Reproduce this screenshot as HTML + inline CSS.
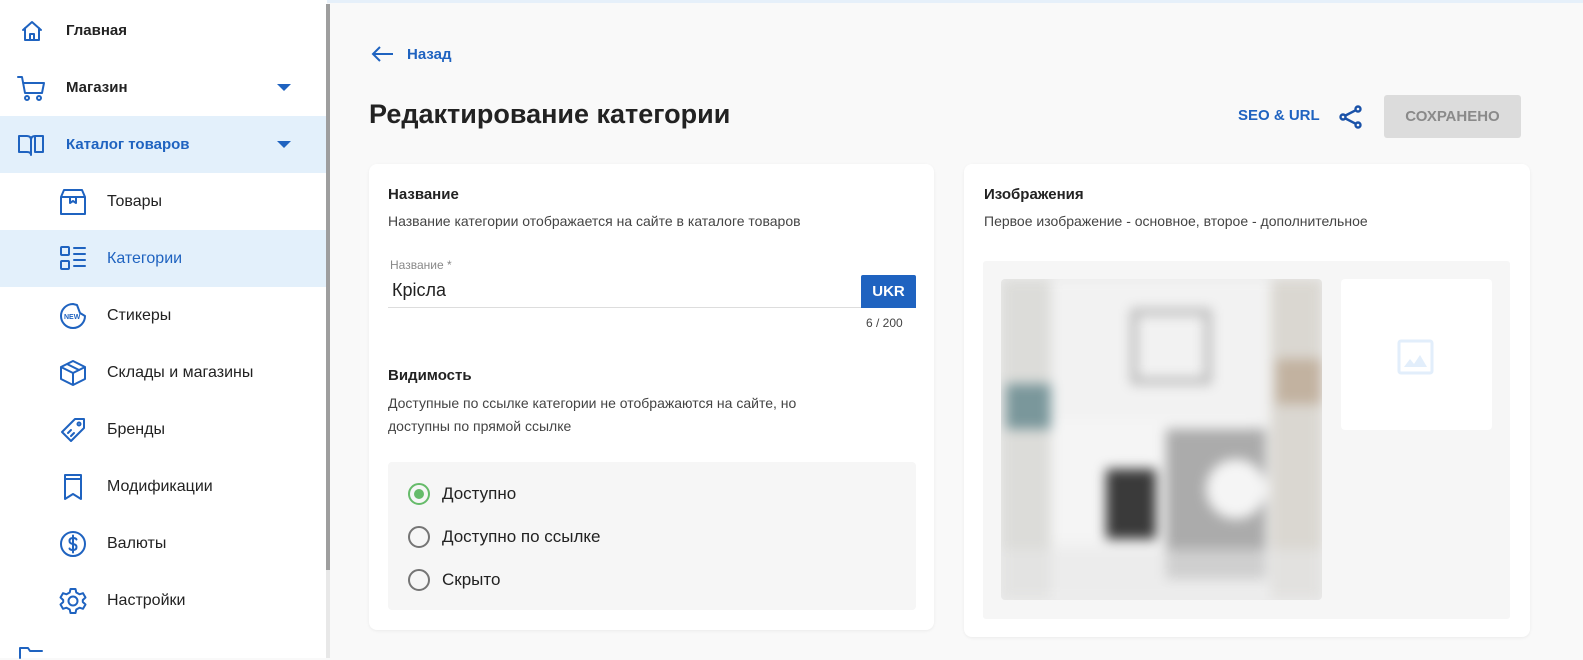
<!DOCTYPE html>
<html><head><meta charset="utf-8"><style>
*{margin:0;padding:0;box-sizing:border-box}
body{width:1583px;height:658px;overflow:hidden;background:#f9f9f9;font-family:"Liberation Sans",Arial,sans-serif;position:relative;color:#222}
.a{position:absolute}
.side{left:0;top:0;width:327px;height:658px;background:#fff}
.sb{left:326px;top:4px;width:4px;height:566px;background:#9e9e9e}
.sbt{left:326px;top:570px;width:4px;height:88px;background:#e8e8e8}
.topl{left:0;top:0;width:1583px;height:3px;background:#e6f0fa}
.it{position:absolute;left:0;width:326px;height:57px;display:flex;align-items:center;font-size:16px;color:#222}
.it.sel{background:#e3f0fb;color:#1f63c0}
.it svg{position:absolute}
.it span{position:absolute}
.ico{fill:none;stroke:#1f63c0;stroke-width:2;stroke-linecap:round;stroke-linejoin:round}
.tri{position:absolute;left:277px;width:0;height:0;border-left:7px solid transparent;border-right:7px solid transparent;border-top:7px solid #1f63c0}
.card{background:#fff;border-radius:8px;box-shadow:0 1px 3px rgba(0,0,0,.06)}
.h{font-weight:bold;font-size:15px;color:#222}
.sub{font-size:14px;color:#444}
.rad{position:absolute;left:408px;width:22px;height:22px;border:2px solid #757575;border-radius:50%}
.rl{position:absolute;left:442px;font-size:17px;color:#222}
</style></head><body>
<div class="a topl"></div>
<div class="a side"></div>
<div class="a sb"></div><div class="a sbt"></div>

<div class="it" style="top:2px"><svg style="left:20px" width="24" height="24" viewBox="0 0 24 24" class="ico"><path d="M3 11 L12 3 L21 11 M5 9 V21 H19 V9 M10 21 V15 H14 V21"/></svg><span style="left:66px;font-weight:bold;font-size:15px">Главная</span></div>
<div class="it" style="top:59px"><svg style="left:16px" width="30" height="30" viewBox="0 0 30 30" class="ico"><path d="M2 4 H6 L9 20 H26 L28 10 H7"/><circle cx="11" cy="25" r="2"/><circle cx="23" cy="25" r="2"/></svg><span style="left:66px;font-weight:bold;font-size:15px">Магазин</span><div class="tri" style="top:25px"></div></div>
<div class="it sel" style="top:116px"><svg style="left:16px" width="30" height="28" viewBox="0 0 30 28" class="ico"><path d="M3 5 H11 Q15 5 15 9 V24 Q15 21 11 21 H3 Z M27 5 H19 Q15 5 15 9 M19 5 V21 H27 V5"/></svg><span style="left:66px;font-weight:bold;font-size:15px">Каталог товаров</span><div class="tri" style="top:25px"></div></div>
<div class="it" style="top:173px"><svg style="left:58px" width="30" height="30" viewBox="0 0 30 30" class="ico"><path d="M3 10 L6 3 H24 L27 10 V27 H3 Z M3 10 H27 M12 10 V16 L15 14 L18 16 V10"/></svg><span style="left:107px">Товары</span></div>
<div class="it sel" style="top:230px"><svg style="left:58px" width="30" height="30" viewBox="0 0 30 30" class="ico"><rect x="3" y="3" width="8" height="8" rx="1"/><rect x="3" y="17" width="8" height="8" rx="1"/><path d="M16 4 H27 M16 10 H27 M16 16 H27 M16 22 H27"/></svg><span style="left:107px">Категории</span></div>
<div class="it" style="top:287px"><svg style="left:58px" width="30" height="30" viewBox="0 0 30 30" class="ico"><path d="M15 3 A12 12 0 1 0 27 15 L22 12 L19 4 Z"/><text x="6" y="18" font-size="7" fill="#1f63c0" stroke="none" font-weight="bold" font-family="Liberation Sans">NEW</text></svg><span style="left:107px">Стикеры</span></div>
<div class="it" style="top:344px"><svg style="left:58px" width="30" height="30" viewBox="0 0 30 30" class="ico"><path d="M15 3 L27 9 V21 L15 27 L3 21 V9 Z M3 9 L15 15 L27 9 M15 15 V27 M9 6 L21 12"/></svg><span style="left:107px">Склады и магазины</span></div>
<div class="it" style="top:401px"><svg style="left:58px" width="30" height="30" viewBox="0 0 30 30" class="ico"><path d="M4 17 L17 4 H26 V13 L13 26 Z M10 18 L13 15 M13 21 L16 18"/><circle cx="21" cy="9" r="1.5"/></svg><span style="left:107px">Бренды</span></div>
<div class="it" style="top:458px"><svg style="left:58px" width="30" height="30" viewBox="0 0 30 30" class="ico"><path d="M7 3 H23 V27 L15 22 L7 27 Z M7 7 H23"/></svg><span style="left:107px">Модификации</span></div>
<div class="it" style="top:515px"><svg style="left:58px" width="30" height="30" viewBox="0 0 30 30" class="ico"><circle cx="15" cy="15" r="12"/><path d="M18.5 10.5 Q18 9 15 9 Q11.5 9 11.5 12 Q11.5 14.5 15 15 Q18.5 15.5 18.5 18 Q18.5 21 15 21 Q12 21 11.5 19.5 M15 6.5 V23.5"/></svg><span style="left:107px">Валюты</span></div>
<div class="it" style="top:572px"><svg style="left:58px" width="30" height="30" viewBox="0 0 30 30" class="ico"><path d="M12.5 3 H17.5 L18.3 6.5 L21.5 8.3 L25 7.2 L27.5 11.5 L24.8 14 V16 L27.5 18.5 L25 22.8 L21.5 21.7 L18.3 23.5 L17.5 27 H12.5 L11.7 23.5 L8.5 21.7 L5 22.8 L2.5 18.5 L5.2 16 V14 L2.5 11.5 L5 7.2 L8.5 8.3 L11.7 6.5 Z"/><circle cx="15" cy="15" r="4.5"/></svg><span style="left:107px">Настройки</span></div>
<svg class="a ico" style="left:18px;top:646px" width="26" height="14" viewBox="0 0 26 14"><path d="M2 12 V2 H10 L12 5 H24"/></svg>

<!-- main -->
<svg class="a" style="left:371px;top:45px" width="24" height="18" viewBox="0 0 24 18" fill="none" stroke="#1f63c0" stroke-width="2"><path d="M22 9 H3 M9 2 L2 9 L9 16"/></svg>
<div class="a" style="left:407px;top:46px;font-size:15px;font-weight:bold;color:#1f63c0">Назад</div>
<div class="a" style="left:369px;top:99px;font-size:27px;font-weight:bold;color:#222">Редактирование категории</div>
<div class="a" style="left:1238px;top:107px;font-size:15px;font-weight:bold;color:#1f63c0">SEO &amp; URL</div>
<svg class="a" style="left:1338px;top:104px" width="26" height="26" viewBox="0 0 26 26" fill="none" stroke="#1a52a8" stroke-width="2.4"><circle cx="20" cy="5" r="2.5"/><circle cx="20" cy="21" r="2.5"/><circle cx="5" cy="13" r="2.5"/><path d="M7.5 11.5 L17.8 6.2 M7.5 14.5 L17.8 19.8"/></svg>
<div class="a" style="left:1384px;top:95px;width:137px;height:43px;background:#dcdcdc;border-radius:3px;color:#8a8a8a;font-size:15px;font-weight:bold;display:flex;align-items:center;justify-content:center">СОХРАНЕНО</div>

<div class="a card" style="left:369px;top:164px;width:565px;height:466px"></div>
<div class="a h" style="left:388px;top:186px">Название</div>
<div class="a sub" style="left:388px;top:213px">Название категории отображается на сайте в каталоге товаров</div>
<div class="a" style="left:390px;top:258px;font-size:12px;color:#888">Название *</div>
<div class="a" style="left:392px;top:280px;font-size:18px;color:#222">Крісла</div>
<div class="a" style="left:388px;top:307px;width:474px;height:1px;background:#ddd"></div>
<div class="a" style="left:861px;top:275px;width:55px;height:33px;background:#1f63c0;color:#fff;font-weight:bold;font-size:15px;display:flex;align-items:center;justify-content:center;border-radius:2px 2px 0 0">UKR</div>
<div class="a" style="left:866px;top:316px;font-size:12px;color:#444">6 / 200</div>
<div class="a h" style="left:388px;top:367px">Видимость</div>
<div class="a sub" style="left:388px;top:392px;line-height:23px;width:470px">Доступные по ссылке категории не отображаются на сайте, но доступны по прямой ссылке</div>
<div class="a" style="left:388px;top:462px;width:528px;height:148px;background:#f6f6f6;border-radius:4px"></div>
<div class="rad" style="top:483px;border-color:#66bb6a"><div style="position:absolute;left:4px;top:4px;width:10px;height:10px;border-radius:50%;background:#66bb6a"></div></div>
<div class="rl" style="top:484px">Доступно</div>
<div class="rad" style="top:526px"></div><div class="rl" style="top:527px">Доступно по ссылке</div>
<div class="rad" style="top:569px"></div><div class="rl" style="top:570px">Скрыто</div>

<div class="a card" style="left:964px;top:164px;width:566px;height:473px"></div>
<div class="a h" style="left:984px;top:186px">Изображения</div>
<div class="a sub" style="left:984px;top:213px">Первое изображение - основное, второе - дополнительное</div>
<div class="a" style="left:983px;top:261px;width:527px;height:358px;background:#f6f6f6;border-radius:3px"></div>
<div class="a" style="left:1001px;top:279px;width:321px;height:321px;border-radius:4px;overflow:hidden;background:#ececec">
 <div style="position:absolute;inset:0;filter:blur(6px)">
  <div class="a" style="left:0;top:0;width:50px;height:321px;background:#dcdcd9"></div>
  <div class="a" style="left:50px;top:0;width:220px;height:321px;background:#f2f2f2"></div>
  <div class="a" style="left:270px;top:0;width:51px;height:321px;background:#dad7d1"></div>
  <div class="a" style="left:275px;top:80px;width:46px;height:45px;background:#c2b2a0"></div>
  <div class="a" style="left:5px;top:105px;width:45px;height:45px;background:#7a979b"></div>
  <div class="a" style="left:130px;top:30px;width:80px;height:75px;border:6px solid #b0b0b0"></div>
  <div class="a" style="left:50px;top:140px;width:200px;height:120px;background:#f5f5f5"></div>
  <div class="a" style="left:105px;top:190px;width:50px;height:70px;background:#3a3a3a"></div>
  <div class="a" style="left:165px;top:150px;width:100px;height:150px;background:#ababab"></div>
  <div class="a" style="left:205px;top:180px;width:60px;height:60px;background:#f5f5f5;border-radius:50%"></div>
  <div class="a" style="left:0;top:270px;width:321px;height:51px;background:#e8e8e8;opacity:.6"></div>
 </div>
</div>
<div class="a" style="left:1341px;top:279px;width:151px;height:151px;background:#fff;border-radius:4px"></div>
<svg class="a" style="left:1397px;top:339px" width="38" height="36" viewBox="0 0 38 36" fill="none"><rect x="2" y="2" width="33" height="32" rx="2" stroke="#e2eefb" stroke-width="3"/><path d="M7 28 L13 20 L17 25 L23 16 L30 28 Z" fill="#e2eefb"/></svg>
</body></html>
